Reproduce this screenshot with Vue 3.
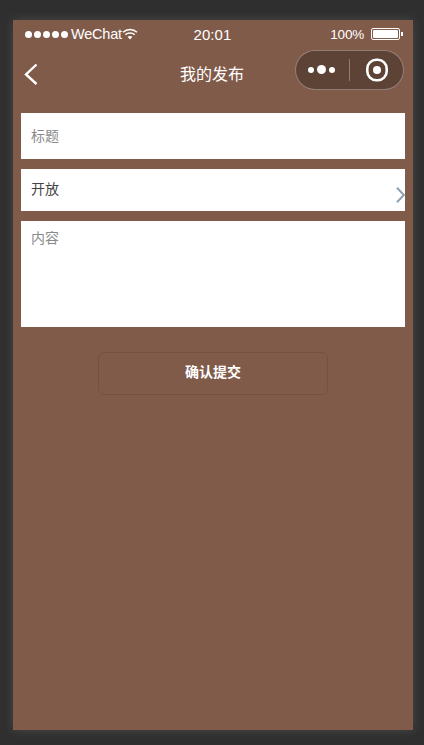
<script setup>
const dots = [1, 2, 3, 4, 5]
</script>

<template>
  <div class="page">
    <div class="phone">
      <div class="status">
        <div class="status-left">
          <div class="dots"><i v-for="d in dots" :key="d"></i></div>
          <span class="carrier">WeChat</span>
          <svg class="wifi" width="16" height="12" viewBox="0 0 16 12">
            <path d="M1 4.2C5 .6 11 .6 15 4.2" fill="none" stroke="#fff" stroke-width="1.5"/>
            <path d="M3.4 6.6C6 4.4 10 4.4 12.6 6.6" fill="none" stroke="#fff" stroke-width="1.5"/>
            <path d="M5.6 8.8C7 7.7 9 7.7 10.4 8.8L8 11.4Z" fill="#fff"/>
          </svg>
        </div>
        <span class="time">20:01</span>
        <div class="status-right">
          <span class="pct">100%</span>
          <div class="battery"><b></b></div>
          <div class="nub"></div>
        </div>
      </div>
      <div class="nav">
        <svg class="back" width="16" height="24" viewBox="0 0 16 24">
          <path d="M13.5 2.5 3 12.5l10.500 9.500" fill="none" stroke="#fff" stroke-width="2.400"/>
        </svg>
        <span class="title">我的发布</span>
        <div class="capsule">
          <div class="more"><i></i><i class="big"></i><i></i></div>
          <div class="divider"></div>
          <svg class="target" width="24" height="24" viewBox="0 0 24 24">
            <rect x="2.300" y="1.800" width="19.400" height="20.400" rx="9" fill="none" stroke="#fff" stroke-width="2.600"/>
            <circle cx="12" cy="12" r="4" fill="#fff"/>
          </svg>
        </div>
      </div>
      <form class="form" @submit.prevent>
        <div class="field title-field placeholder">标题</div>
        <div class="field select-field">开放</div>
        <div class="field content-field placeholder">内容</div>
        <svg class="arrow" width="9" height="16" viewBox="0 0 9 16">
          <path d="M1 .8l6.800 7.200L1 15.200" fill="none" stroke="#8fa3b2" stroke-width="2"/>
        </svg>
        <button class="submit" type="submit">确认提交</button>
      </form>
    </div>
  </div>
</template>

<style scoped>
.page {
  width: 424px;
  height: 745px;
  box-sizing: border-box;
  padding: 20px 11px 15px 13px;
  background: #2f2f2f;
  font-family: "Liberation Sans", "Noto Sans CJK SC", sans-serif;
  overflow: hidden;
}
.phone {
  width: 400px;
  height: 710px;
  background: #815b4a;
  color: #fff;
  box-shadow: 0 0 10px rgba(255, 255, 255, 0.13);
}
.status {
  height: 27px;
  display: grid;
  grid-template-columns: 1fr auto 1fr;
  align-items: center;
  padding: 1px 10px 0 12px;
  box-sizing: border-box;
}
.status-left, .status-right { display: flex; align-items: center; }
.status-right { justify-content: flex-end; }
.dots { display: flex; gap: 2px; margin-right: 3px; }
.dots i { width: 7px; height: 7px; border-radius: 50%; background: #fff; }
.carrier { font-size: 14.500px; letter-spacing: -0.2px; }
.wifi { margin-left: 0; }
.time { font-size: 15px; letter-spacing: 0.1px; margin-left: -3px; }
.pct { font-size: 13.500px; margin-right: 7px; letter-spacing: -0.2px; }
.battery {
  width: 29px;
  height: 12px;
  box-sizing: border-box;
  border: 1px solid #fff;
  border-radius: 2px;
  padding: 1px;
  display: flex;
}
.battery b { flex: 1; background: #fff; border-radius: 1px; }
.nub { width: 2px; height: 4px; background: #fff; margin-left: 1px; }
.nav {
  height: 66px;
  position: relative;
  display: flex;
  align-items: center;
  justify-content: center;
  padding-bottom: 15px;
  box-sizing: border-box;
}
.back { position: absolute; left: 10px; top: 15px; }
.title { font-size: 16px; margin-left: -2px; }
.capsule {
  position: absolute;
  left: 282px;
  top: 3px;
  width: 109px;
  height: 40px;
  box-sizing: border-box;
  border: 1px solid rgba(255, 255, 255, 0.32);
  border-radius: 20px;
  background: #5d4236;
  display: flex;
  align-items: center;
}
.more { width: 53px; display: flex; justify-content: center; align-items: center; gap: 3px; margin: -1px 0 0 -1px; }
.more i { width: 6px; height: 6px; border-radius: 50%; background: #fff; }
.more i.big { width: 9px; height: 9px; }
.divider { width: 1px; height: 22px; background: rgba(255, 255, 255, 0.3); margin-left: 1px; }
.target { margin-left: 15px; margin-top: -1px; }
.form {
  position: relative;
  padding: 0 8px;
  display: flex;
  flex-direction: column;
  gap: 10px;
}
.field {
  background: #fff;
  color: #444;
  font-size: 14px;
  padding-left: 10px;
  box-sizing: border-box;
}
.placeholder { color: #8a8a8a; }
.title-field { height: 46px; line-height: 46px; }
.select-field { height: 42px; line-height: 40px; }
.content-field { height: 106px; padding-top: 8px; line-height: 19px; }
.arrow { position: absolute; left: 383px; top: 74px; }
.submit {
  align-self: center;
  width: 230px;
  height: 43px;
  margin-top: 15px;
  margin-left: -1px;
  padding: 0 0 6px 1px;
  background: transparent;
  border: 1px solid #745242;
  border-radius: 6px;
  color: #fff;
  font: bold 14px "Liberation Sans", "Noto Sans CJK SC", sans-serif;
}
</style>
